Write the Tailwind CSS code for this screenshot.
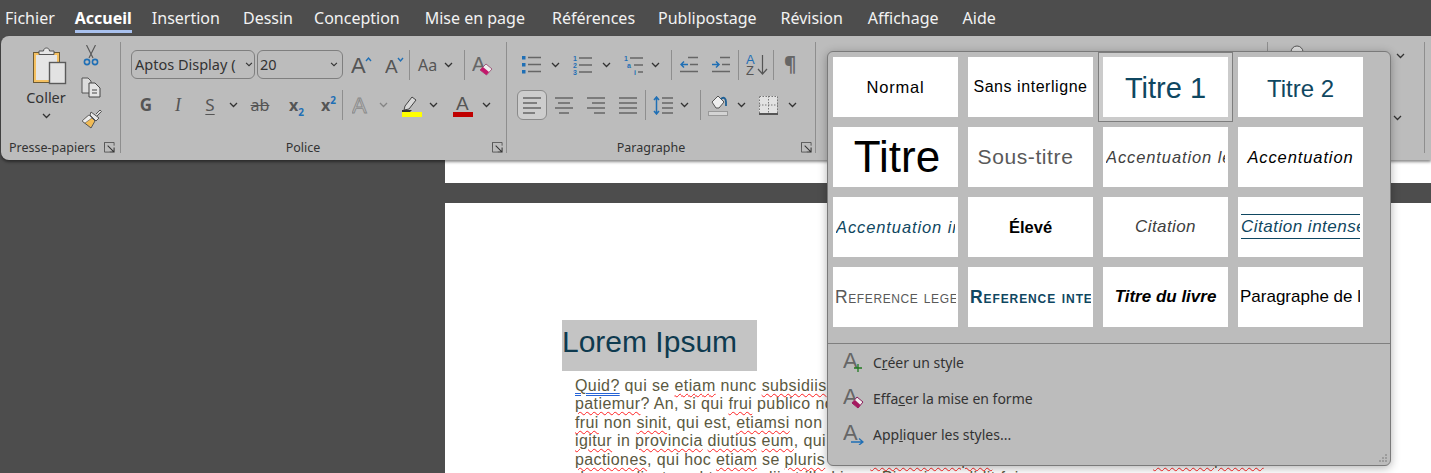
<!DOCTYPE html>
<html lang="fr">
<head>
<meta charset="UTF-8" />
<title>Accueil - Styles</title>
<script src="https://cdn.jsdelivr.net/npm/@tailwindcss/browser@4"></script>
</head>
<body class="m-0">
<svg class="hidden">
  <symbol id="chev" viewBox="0 0 9 6"><path d="M1 1l3.5 3.5L8 1" fill="none" stroke="#333" stroke-width="1.3"/></symbol>
  <symbol id="launch" viewBox="0 0 12 12"><path d="M.5 6V.5h10.5V4M.5 .5V11H6" fill="none" stroke="#555"/><path d="M4 4l6.5 6.5M11 6v5H6" fill="none" stroke="#333" stroke-width="1.1"/></symbol>
</svg>
<div class="relative w-[1431px] h-[473px] overflow-hidden bg-[#4d4d4d] font-['Noto_Sans',sans-serif]">

  <!-- Tabs -->
  <nav class="flex h-[36px] items-center gap-[23px] pl-[5px] pb-[1px] text-[16px] text-[#f2f2f2]">
    <span>Fichier</span>
    <span class="relative -mx-[3px] font-bold text-white">Accueil<span class="absolute left-0 right-0 top-[24px] h-[3px] bg-[#a9c1ee]"></span></span>
    <span>Insertion</span>
    <span>Dessin</span>
    <span class="-ml-[2px]">Conception</span>
    <span class="ml-[2px]">Mise en page</span>
    <span class="ml-[4px]">Références</span>
    <span>Publipostage</span>
    <span class="ml-[1px]">Révision</span>
    <span class="ml-[2px]">Affichage</span>
    <span class="ml-[1px]">Aide</span>
  </nav>

  <!-- Ribbon -->
  <section class="relative z-10 ml-[1px] flex h-[124px] rounded-l-lg bg-[#bcbcbc] py-[6px] text-[#333] shadow-[0_2px_3px_rgba(0,0,0,0.45)]">

    <!-- Presse-papiers -->
    <div class="flex h-[111px] w-[120px] flex-col border-r border-[#8e8e8e]">
      <div class="flex">
        <div class="ml-[10px] flex w-[70px] flex-col items-center pt-[3px]">
          <svg class="ml-[7px]" width="36" height="40" viewBox="0 0 36 40">
            <rect x="1.5" y="7.5" width="26" height="30" fill="#f4c061" stroke="#6b5a36"/>
            <rect x="4" y="10" width="21" height="25" fill="#e6e6e6"/>
            <path d="M7 9V6h4.5c0-4 6-4 6 0H22v3.5H7z" fill="#e6e6e6" stroke="#555"/>
            <rect x="17.5" y="17.5" width="16" height="21" fill="#e2e2e2" stroke="#5a5a5a" stroke-width="1.4"/>
          </svg>
          <span class="mt-[2px] text-[14.5px] leading-[20px]">Coller</span>
          <svg class="mt-[6px]" width="9" height="6"><use href="#chev"/></svg>
        </div>
        <div class="flex w-[20px] flex-col items-center pt-[3px]">
          <svg width="16" height="21" viewBox="0 0 16 21">
            <path d="M3.5 0L10 13M12.5 0L6 13" fill="none" stroke="#555" stroke-width="1.1"/>
            <circle cx="4" cy="17" r="2.6" fill="none" stroke="#1f6fb5" stroke-width="1.6"/>
            <circle cx="12" cy="17" r="2.6" fill="none" stroke="#1f6fb5" stroke-width="1.6"/>
          </svg>
          <svg class="mt-[11px]" width="20" height="21" viewBox="0 0 20 21">
            <path d="M1 1h6l3 3v12H1z" fill="#dcdcdc" stroke="#555"/>
            <path d="M8 6h6l5 5v9H8z" fill="#e4e4e4" stroke="#444"/>
            <path d="M11 13h5M11 16h5" stroke="#444"/>
          </svg>
          <svg class="mt-[11px]" width="21" height="20" viewBox="0 0 21 20">
            <path d="M15 5l4-4 1.5 1.5L16 7" fill="#ddd" stroke="#555"/>
            <path d="M10 3l8 6-3 3-6-6z" fill="#e8e8e8" stroke="#555"/>
            <path d="M8 6l6 6-4 7-9-7z" fill="#f1bb55" stroke="#555"/>
            <path d="M8 6l3 3-7 5-3-2z" fill="#eee" stroke="#555" stroke-width=".6"/>
          </svg>
        </div>
      </div>
      <div class="mt-auto -mb-[1px] flex h-[14px] items-center pl-[8px] text-[12.5px] leading-[14px]">
        <span class="translate-y-[1px]">Presse-papiers</span>
        <svg class="ml-[9px]" width="11" height="11"><use href="#launch"/></svg>
      </div>
    </div>

    <!-- Police -->
    <div class="flex h-[111px] w-[386px] flex-col border-r border-[#8e8e8e] pt-[8px]">
      <div class="flex h-[29px] items-center">
        <div class="ml-[10px] flex h-[29px] w-[124px] items-center rounded-md border border-[#7f7f7f] pl-[3px] text-[14.5px]">
          <span class="w-[104px] overflow-hidden whitespace-nowrap">Aptos Display (</span>
          <svg class="ml-[6px]" width="8" height="5"><use href="#chev"/></svg>
        </div>
        <div class="ml-[2px] flex h-[29px] w-[86px] items-center justify-between rounded-md border border-[#7f7f7f] pl-[2px] pr-[4px] text-[14.5px]">
          <span>20</span>
          <svg width="8" height="5"><use href="#chev"/></svg>
        </div>
        <svg class="ml-[8px]" width="21" height="20" viewBox="0 0 21 20"><text x="0" y="18" font-family="Liberation Sans" font-size="22" fill="#555">A</text><path d="M15 6l2.5-3L20 6" fill="none" stroke="#1f6fb5" stroke-width="1.4"/></svg>
        <svg class="ml-[13px]" width="20" height="20" viewBox="0 0 20 20"><text x="0" y="18" font-family="Liberation Sans" font-size="19" fill="#555">A</text><path d="M13 3l2.5 3L18 3" fill="none" stroke="#1f6fb5" stroke-width="1.4"/></svg>
        <span class="ml-[4px] h-[30px] w-px bg-[#8e8e8e]"></span>
        <span class="ml-[8px] w-[24px] text-[16px] text-[#555]">Aa</span>
        <svg class="ml-[2px]" width="9" height="6"><use href="#chev"/></svg>
        <span class="ml-[11px] h-[30px] w-px bg-[#8e8e8e]"></span>
        <svg class="ml-[7px]" width="21" height="22" viewBox="0 0 21 22"><text x="0" y="17" font-family="Liberation Sans" font-size="20" fill="#666">A</text><path d="M8 16l6-6 6 5-5.5 6z" fill="#eee" stroke="#8a2c5a" stroke-width=".7"/><path d="M8 16l3-3 6 5-2.500 3z" fill="#c2186b"/></svg>
      </div>
      <div class="mt-[11px] flex h-[30px] items-center text-[#555]">
        <span class="ml-[9px] w-[32px] text-center text-[17px] font-bold">G</span>
        <span class="w-[32px] text-center font-['Liberation_Serif',serif] text-[18px] italic">I</span>
        <span class="w-[32px] text-center text-[17px] underline underline-offset-3">S</span>
        <svg class="ml-[3px]" width="9" height="6"><use href="#chev"/></svg>
        <span class="ml-[4px] w-[36px] text-center text-[16px] line-through">ab</span>
        <span class="w-[34px] pl-[11px] text-[16px] font-bold">x<span class="relative top-[5px] text-[10px] text-[#1f6fb5]">2</span></span>
        <span class="w-[30px] pl-[9px] text-[16px] font-bold">x<span class="relative -top-[7px] text-[10px] text-[#1f6fb5]">2</span></span>
        <span class="h-[30px] w-px bg-[#8e8e8e]"></span>
        <svg class="ml-[9px]" width="20" height="20" viewBox="0 0 20 20"><text x="0" y="18" font-family="Liberation Sans" font-size="22" fill="#bcbcbc" stroke="#8a8a8a" stroke-width=".9">A</text></svg>
        <svg class="ml-[7px] opacity-40" width="9" height="6"><use href="#chev"/></svg>
        <svg class="ml-[13px]" width="21" height="23" viewBox="0 0 21 23"><path d="M4 12l7-9 4 3-7 9-5 1z" fill="#d8d8d8" stroke="#444"/><path d="M1 16h10l-2 2H1z" fill="#333"/><rect x="1" y="18" width="20" height="5" fill="#ffff00"/></svg>
        <svg class="ml-[7px]" width="9" height="6"><use href="#chev"/></svg>
        <svg class="ml-[15px]" width="20" height="23" viewBox="0 0 20 23"><text x="3" y="16" font-family="Liberation Sans" font-size="19" fill="#555">A</text><rect y="18" width="20" height="5" fill="#c00000"/></svg>
        <svg class="ml-[9px]" width="9" height="6"><use href="#chev"/></svg>
      </div>
      <div class="mt-auto -mb-[1px] flex h-[14px] items-center pr-[3px] text-[12.5px] leading-[14px]">
        <span class="flex-1 translate-y-[1px] pr-[7px] text-center">Police</span>
        <svg width="11" height="11"><use href="#launch"/></svg>
      </div>
    </div>

    <!-- Paragraphe -->
    <div class="flex h-[111px] w-[309px] flex-col border-r border-[#8e8e8e] pt-[8px]">
      <div class="flex h-[29px] items-center">
        <svg class="ml-[15px]" width="19" height="19" viewBox="0 0 19 19"><path d="M0 1h3.5v3.5H0zM0 8h3.5v3.5H0zM0 15h3.5v3.5H0z" fill="#1f6fb5"/><path d="M6 2.5h13M6 9.5h13M6 16.5h13" stroke="#666" stroke-width="1.4"/></svg>
        <svg class="ml-[10px]" width="9" height="6"><use href="#chev"/></svg>
        <svg class="ml-[13px]" width="19" height="20" viewBox="0 0 19 20" font-family="Liberation Sans" font-weight="700" font-size="7" fill="#1f6fb5"><text x="0" y="6">1</text><text x="0" y="13">2</text><text x="0" y="20">3</text><path d="M6 3h13M6 10h13M6 17h13" stroke="#666" stroke-width="1.4"/></svg>
        <svg class="ml-[10px]" width="9" height="6"><use href="#chev"/></svg>
        <svg class="ml-[13px]" width="19" height="20" viewBox="0 0 19 20" font-family="Liberation Sans" font-weight="700" font-size="7" fill="#1f6fb5"><text x="0" y="6">1</text><text x="3" y="13">a</text><text x="10" y="20">i</text><path d="M6 3h13M10 10h9M14 17h5" stroke="#666" stroke-width="1.4"/></svg>
        <svg class="ml-[8px]" width="9" height="6"><use href="#chev"/></svg>
        <span class="ml-[11px] h-[30px] w-px bg-[#8e8e8e]"></span>
        <svg class="ml-[8px]" width="18" height="17" viewBox="0 0 18 17"><path d="M8 1.5h10M10 8.5h8M0 15.5h18" stroke="#666" stroke-width="1.4"/><path d="M8 8.5H1M4 5.5l-3 3 3 3" fill="none" stroke="#1f6fb5" stroke-width="1.5"/></svg>
        <svg class="ml-[14px]" width="18" height="17" viewBox="0 0 18 17"><path d="M8 1.5h10M10 8.5h8M0 15.5h18" stroke="#666" stroke-width="1.4"/><path d="M0 8.5h7M4 5.5l3 3-3 3" fill="none" stroke="#1f6fb5" stroke-width="1.5"/></svg>
        <span class="ml-[8px] h-[30px] w-px bg-[#8e8e8e]"></span>
        <svg class="ml-[7px]" width="22" height="22" viewBox="0 0 22 22" font-family="Liberation Sans" font-size="13"><text x="0" y="10" fill="#1f6fb5">A</text><text x="0" y="21" fill="#555">Z</text><path d="M16.500 1v19M12 15l4.500 5 4.500-5" fill="none" stroke="#555" stroke-width="1.200"/></svg>
        <span class="ml-[5px] h-[30px] w-px bg-[#8e8e8e]"></span>
        <span class="ml-[10px] w-[14px] text-[19px] font-bold leading-none text-[#666]">¶</span>
      </div>
      <div class="mt-[11px] flex h-[30px] items-center">
        <span class="ml-[10px] flex h-[30px] w-[30px] items-center justify-center rounded-md border border-[#8a8a8a] bg-[#cdcdcd]">
          <svg width="18" height="17" viewBox="0 0 18 17"><path d="M0 1h18M0 6h14M0 11h18M0 16h12" stroke="#666" stroke-width="1.4"/></svg>
        </span>
        <svg class="ml-[8px]" width="18" height="17" viewBox="0 0 18 17"><path d="M0 1h18M3 6h12M0 11h18M4 16h10" stroke="#666" stroke-width="1.4"/></svg>
        <svg class="ml-[14px]" width="18" height="17" viewBox="0 0 18 17"><path d="M0 1h18M5 6h13M0 11h18M7 16h11" stroke="#666" stroke-width="1.4"/></svg>
        <svg class="ml-[14px]" width="18" height="17" viewBox="0 0 18 17"><path d="M0 1h18M0 6h18M0 11h18M0 16h18" stroke="#666" stroke-width="1.4"/></svg>
        <span class="ml-[8px] h-[30px] w-px bg-[#8e8e8e]"></span>
        <svg class="ml-[7px]" width="20" height="19" viewBox="0 0 20 19"><path d="M3.500 1v17M1 4l2.500-3L6 4M1 15l2.500 3L6 15" fill="none" stroke="#1f6fb5" stroke-width="1.500"/><path d="M9 2h11M9 7h11M9 12h11M9 17h11" stroke="#666" stroke-width="1.400"/></svg>
        <svg class="ml-[7px]" width="9" height="6"><use href="#chev"/></svg>
        <span class="ml-[11px] h-[30px] w-px bg-[#8e8e8e]"></span>
        <svg class="ml-[7px]" width="20" height="21" viewBox="0 0 20 21"><path d="M4 7l6-6 6 6-5 6H8z" fill="#eee" stroke="#555"/><path d="M13 4c3-3 5 0 5 3v4" fill="none" stroke="#1f5f94" stroke-width="1.800"/><rect x=".5" y="16.500" width="19" height="4" fill="#d4d4d4" stroke="#999"/></svg>
        <svg class="ml-[9px]" width="9" height="6"><use href="#chev"/></svg>
        <svg class="ml-[13px]" width="19" height="19" viewBox="0 0 19 19"><rect width="18" height="17" fill="#e2e2e2"/><path d="M.500 .500h18v17M.500 .500v17M9.500 0v18M0 9h19" fill="none" stroke="#777" stroke-dasharray="1.500 1.500"/><path d="M0 18h19" stroke="#333" stroke-width="1.500"/></svg>
        <svg class="ml-[10px]" width="9" height="6"><use href="#chev"/></svg>
      </div>
      <div class="mt-auto -mb-[1px] flex h-[14px] items-center pr-[3px] text-[12.5px] leading-[14px]">
        <span class="flex-1 translate-y-[1px] pr-[6px] text-center">Paragraphe</span>
        <svg width="11" height="11"><use href="#launch"/></svg>
      </div>
    </div>

    <!-- Styles: the gallery is covered by the open menu -->
    <div class="h-[111px] w-[452px] border-r border-[#8e8e8e]"></div>

    <!-- Edition -->
    <div class="h-[111px] w-[157px] border-r border-[#8e8e8e] pt-[3px]">
      <div class="flex items-start">
        <svg class="ml-[22px]" width="14" height="14" viewBox="0 0 14 14"><circle cx="7" cy="7" r="6" fill="#ddd" stroke="#555"/></svg>
        <svg class="ml-[92px] mt-[8px]" width="9" height="6"><use href="#chev"/></svg>
      </div>
      <svg class="ml-[125px] mt-[56px]" width="9" height="6"><use href="#chev"/></svg>
    </div>
  </section>

  <!-- Document -->
  <main class="pl-[445px]">
    <div class="h-[23px] bg-white"></div>
    <div class="mt-[20px] h-[300px] bg-white pl-[117px] pt-[117px]">
      <h1 class="flex h-[51px] w-[195px] items-center bg-[#c4c4c4] pb-[8px] font-['Liberation_Sans',sans-serif] text-[30px] text-[#0e3a4f]">Lorem Ipsum</h1>
      <div class="ml-[13px] mt-[6px] whitespace-nowrap font-['Liberation_Sans',sans-serif] text-[16px] leading-[18.4px] tracking-[0.4px] text-[#5b593f]">
        <p><span class="underline decoration-[#2563d6] decoration-double decoration-1 underline-offset-2">Quid?</span> qui se <span class="underline decoration-wavy decoration-[#ff2020] decoration-1 underline-offset-2">etiam</span> nunc <span class="underline decoration-wavy decoration-[#ff2020] decoration-1 underline-offset-2">subsidiis</span> patriae</p>
        <p><span class="underline decoration-wavy decoration-[#ff2020] decoration-1 underline-offset-2">patiemur</span>? An, si qui <span class="underline decoration-wavy decoration-[#ff2020] decoration-1 underline-offset-2">frui</span> publico non possit</p>
        <p><span class="underline decoration-wavy decoration-[#ff2020] decoration-1 underline-offset-2">frui</span> non <span class="underline decoration-wavy decoration-[#ff2020] decoration-1 underline-offset-2">sinit</span>, qui est, <span class="underline decoration-wavy decoration-[#ff2020] decoration-1 underline-offset-2">etiamsi</span> non sit</p>
        <p><span class="underline decoration-wavy decoration-[#ff2020] decoration-1 underline-offset-2">igitur</span> in <span class="underline decoration-wavy decoration-[#ff2020] decoration-1 underline-offset-2">provincia</span> <span class="underline decoration-wavy decoration-[#ff2020] decoration-1 underline-offset-2">diutius</span> <span class="underline decoration-wavy decoration-[#ff2020] decoration-1 underline-offset-2">eum</span>, qui</p>
        <p><span class="underline decoration-wavy decoration-[#ff2020] decoration-1 underline-offset-2">pactiones</span>, qui hoc <span class="underline decoration-wavy decoration-[#ff2020] decoration-1 underline-offset-2">etiam</span> se <span class="underline decoration-wavy decoration-[#ff2020] decoration-1 underline-offset-2">pluris</span> esse <span class="underline decoration-wavy decoration-[#ff2020] decoration-1 underline-offset-2">aestimat aliquos</span> et ita non est ibi sed <span class="underline decoration-wavy decoration-[#ff2020] decoration-1 underline-offset-2">videtur quidem</span></p>
        <p>ducere dicat, sed tamen alii et illud in eo Pisonis credidit fuisse</p>
      </div>
    </div>
  </main>

  <!-- Styles menu -->
  <div class="absolute left-[827px] top-[51px] z-20 h-[415px] w-[564px] rounded-md border border-[#7a7a7a] bg-[#bcbcbc] pt-[5px] text-[#333] shadow-[0_2px_10px_rgba(0,0,0,0.3)]">
    <div class="ml-[5px] grid grid-cols-[repeat(4,125px)] auto-rows-[60px] gap-[10px] font-['Liberation_Sans',sans-serif]">
      <div class="flex items-center justify-center bg-white text-[16.5px] tracking-[0.8px] text-black">Normal</div>
      <div class="flex items-center justify-center bg-white text-[16px] tracking-[0.55px] text-black">Sans interligne</div>
      <div class="flex items-center justify-center bg-white pt-[3px] text-[29px] text-[#0f4761] shadow-[0_0_0_4px_#cbcbcb,0_0_0_5px_#7e7e7e]">Titre 1</div>
      <div class="flex items-center justify-center bg-white pt-[3px] text-[24px] text-[#0f4761]">Titre 2</div>

      <div class="flex items-center justify-center bg-white pl-[3px] text-[44px] text-black">Titre</div>
      <div class="flex items-center justify-center bg-white pr-[10px] text-[21px] tracking-[0.6px] text-[#595959]">Sous-titre</div>
      <div class="flex items-center bg-white px-[3px]"><span class="block w-full overflow-hidden whitespace-nowrap text-[16.5px] italic tracking-[0.9px] text-[#404040]">Accentuation légère</span></div>
      <div class="flex items-center justify-center bg-white text-[16.5px] italic tracking-[0.9px] text-black">Accentuation</div>

      <div class="flex items-center bg-white px-[3px]"><span class="block w-full overflow-hidden whitespace-nowrap text-[16.5px] italic tracking-[0.9px] text-[#0f4761]">Accentuation intense</span></div>
      <div class="flex items-center justify-center bg-white text-[16.5px] font-bold text-black">Élevé</div>
      <div class="flex items-center justify-center bg-white text-[17px] italic tracking-[0.4px] text-[#404040]">Citation</div>
      <div class="flex items-center bg-white px-[3px]"><span class="block w-full -translate-y-[1px] overflow-hidden whitespace-nowrap border-y border-[#0f4761] py-[3px] text-[17px] leading-[17px] italic tracking-[0.5px] text-[#0f4761]">Citation intense</span></div>

      <div class="flex items-center bg-white px-[2px]"><span class="block w-full overflow-hidden whitespace-nowrap text-[17.5px] tracking-[0.6px] text-[#595959] [font-variant:small-caps]">Reference legere</span></div>
      <div class="flex items-center bg-white px-[2px]"><span class="block w-full overflow-hidden whitespace-nowrap text-[17.5px] font-bold tracking-[0.9px] text-[#0f4761] [font-variant:small-caps]">Reference intense</span></div>
      <div class="flex items-center justify-center bg-white text-[17px] font-bold italic text-black">Titre du livre</div>
      <div class="flex items-center bg-white pl-[2px] pr-[3px]"><span class="block w-full overflow-hidden whitespace-nowrap text-[17px] text-black">Paragraphe de liste</span></div>
    </div>

    <div class="mt-[16px] h-px bg-[#7f7f7f]"></div>

    <ul class="text-[14px]">
      <li class="flex h-[36px] items-center pl-[15px]">
        <svg width="21" height="22" viewBox="0 0 21 22"><text x="0" y="17" font-family="Liberation Sans" font-size="22" fill="#666">A</text><path d="M15 13v8M11 17h8" stroke="#217a21" stroke-width="1.300"/></svg>
        <span class="ml-[9px]">C<u>r</u>éer un style</span>
      </li>
      <li class="flex h-[36px] items-center pl-[15px]">
        <svg width="21" height="22" viewBox="0 0 21 22"><text x="0" y="17" font-family="Liberation Sans" font-size="22" fill="#666">A</text><path d="M9 16l5-6 6 5-5 6z" fill="#eee" stroke="#8c1d5a"/><path d="M9 16l3-3 5.500 5L15 21z" fill="#a5195f"/></svg>
        <span class="ml-[9px]">Effa<u>c</u>er la mise en forme</span>
      </li>
      <li class="flex h-[36px] items-center pl-[15px]">
        <svg width="21" height="22" viewBox="0 0 21 22"><text x="0" y="17" font-family="Liberation Sans" font-size="22" fill="#666">A</text><path d="M8 19h12M16 15.500l4 3.500-4 3" fill="none" stroke="#1f6fb5" stroke-width="1.300"/></svg>
        <span class="ml-[9px]">App<u>l</u>iquer les styles...</span>
      </li>
    </ul>

    <svg class="absolute bottom-[2px] right-[2px]" width="9" height="9" viewBox="0 0 9 9" fill="#9c9c9c"><path d="M6 0h2v2H6zM3 3h2v2H3zM6 3h2v2H6zM0 6h2v2H0zM3 6h2v2H3zM6 6h2v2H6z"/></svg>
  </div>
</div>
</body>
</html>
